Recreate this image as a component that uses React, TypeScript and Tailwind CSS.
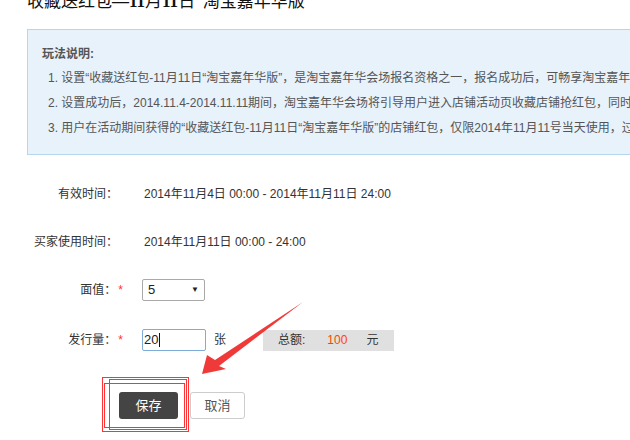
const font = "font-['Liberation_Sans','Noto_Sans_CJK_SC',sans-serif]";

function FormRow({
  label,
  required,
  children,
  className = "",
}: {
  label: string;
  required?: boolean;
  children: React.ReactNode;
  className?: string;
}) {
  return (
    <div className={`flex items-center ${className}`}>
      <div className="w-[123px] shrink-0 text-right text-[12px] text-[#333]">
        {label}
        {required ? <span className="ml-[2px] text-[#f33]">*</span> : <span className="inline-block w-[5px]" />}
      </div>
      <div className="ml-[21px] flex items-center text-[12px] text-[#333]">{children}</div>
    </div>
  );
}

export default function App() {
  return (
    <div className={`relative h-[440px] w-[630px] overflow-hidden bg-white ${font}`}>
      <h1 className="mt-[-8px] ml-[27px] whitespace-nowrap font-['Liberation_Serif','Noto_Sans_CJK_SC',serif] text-[17px] leading-[20px] text-[#111]">
        收藏送红包<b>—11</b>月<b>11</b>日“淘宝嘉年华版
      </h1>

      <section className="mt-[17px] ml-[27px] h-[126px] w-[700px] border border-[#b5d6ef] bg-[#e8f2fb] pl-[14px] pt-[15px] text-[12px] text-[#555]">
        <p className="font-bold leading-[18px]">玩法说明:</p>
        <ol className="mt-[6px] ml-[6px] space-y-[7px] whitespace-nowrap leading-[18px]">
          <li>1. 设置“收藏送红包-11月11日“淘宝嘉年华版”，是淘宝嘉年华会场报名资格之一，报名成功后，可畅享淘宝嘉年华会场流量</li>
          <li>2. 设置成功后，2014.11.4-2014.11.11期间，淘宝嘉年华会场将引导用户进入店铺活动页收藏店铺抢红包，同时参与活动</li>
          <li>3. 用户在活动期间获得的“收藏送红包-11月11日“淘宝嘉年华版”的店铺红包，仅限2014年11月11号当天使用，过期作废</li>
        </ol>
      </section>

      <div className="mt-[27px]">
        <FormRow label="有效时间：" className="h-[24px]">
          2014年11月4日 00:00 - 2014年11月11日 24:00
        </FormRow>
        <FormRow label="买家使用时间：" className="mt-[24px] h-[24px]">
          2014年11月11日 00:00 - 24:00
        </FormRow>
        <FormRow label="面值：" required className="mt-[24px] h-[24px]">
          <div className="-ml-[2px] flex h-[22px] w-[63px] items-center justify-between rounded-[2px] border border-[#a9a9a9] bg-white pl-[5px] pr-[5px] text-[13px] text-[#222]">
            <span>5</span>
            <span className="text-[8px]">▼</span>
          </div>
        </FormRow>
        <FormRow label="发行量：" required className="mt-[27px] h-[22px]">
          <div className="-ml-[2px] flex h-[22px] w-[64px] items-center rounded-[2px] border border-[#7eadd9] bg-white pl-[1px] text-[13px] text-[#222]">
            20
            <span className="ml-[1px] inline-block h-[14px] w-px bg-[#111]" />
          </div>
          <span className="ml-[8px]">张</span>
          <div className="ml-[37px] flex h-[21px] w-[131px] items-center bg-[#e0e0e0] pl-[15px]">
            <span>总额:</span>
            <span className="ml-[22px] text-[#f40]">100</span>
            <span className="ml-[19px]">元</span>
          </div>
        </FormRow>

        <div className="mt-[41px] ml-[119px] flex gap-[12px] text-[12px]">
          <button className="h-[27px] w-[59px] rounded-[3px] bg-[#444] text-[13px] text-white">保存</button>
          <button className="h-[27px] w-[55px] rounded-[3px] border border-[#ccc] bg-white text-[13px] text-[#555]">取消</button>
        </div>
      </div>

      {/* red annotations drawn over the screenshot */}
      <svg className="pointer-events-none absolute inset-0" width="630" height="440">
        <rect x="102.5" y="377.5" width="86" height="54" fill="none" stroke="#f33" strokeWidth="1" />
        <rect x="104.5" y="383.5" width="80" height="44" fill="none" stroke="#f33" strokeWidth="1" />
        <rect x="109.5" y="379.5" width="77" height="50" fill="none" stroke="#f33" strokeWidth="1" />
        <polygon points="202,374 207,355 215,360 303,302 219,366 226,369" fill="#f03a3a" />
      </svg>
    </div>
  );
}
